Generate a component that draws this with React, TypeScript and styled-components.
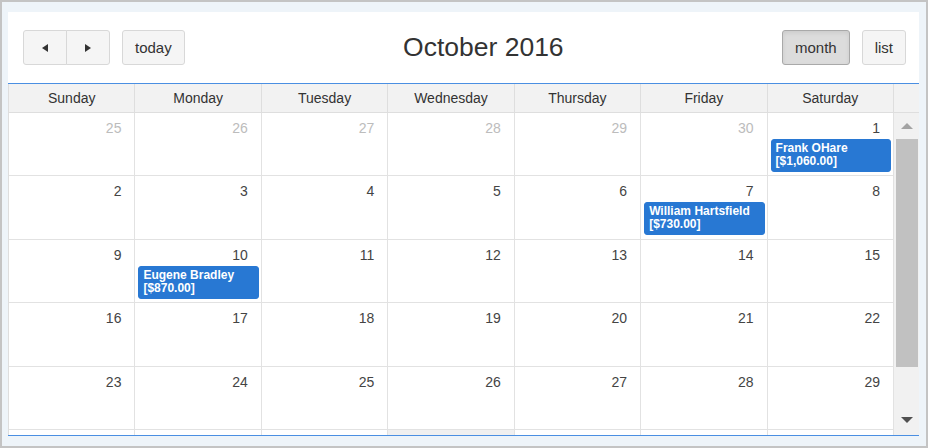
import React from "react";
import styled, { createGlobalStyle, css } from "styled-components";

const GlobalStyle = createGlobalStyle`
  html, body { margin: 0; padding: 0; }
  body { font-family: "Liberation Sans", Arial, sans-serif; }
  * { box-sizing: border-box; }
`;

const Frame = styled.div`
  width: 928px;
  height: 448px;
  border: 2px solid #c4c4c4;
  background: #eef4f9;
  padding: 10px 7px 10px 6px;
  display: flex;
`;

const Panel = styled.div`
  flex: 1;
  background: #fff;
  display: flex;
  flex-direction: column;
  overflow: hidden;
`;

const Toolbar = styled.div`
  height: 71px;
  flex-shrink: 0;
  display: flex;
  align-items: center;
  padding: 0 13px 0 15px;
`;

const Group = styled.div`
  display: flex;
  align-items: center;
  gap: 12px;
`;

const Joined = styled.div`
  display: flex;
`;

const Button = styled.button<{ $active?: boolean; $join?: "first" | "last" }>`
  height: 35px;
  padding: 0 12px;
  font-family: "Liberation Sans", Arial, sans-serif;
  font-size: 15px;
  color: #333;
  background: #f5f5f5;
  border: 1px solid #d8d8d8;
  border-radius: 3px;
  display: flex;
  align-items: center;
  justify-content: center;
  cursor: pointer;
  ${(p) =>
    p.$active &&
    css`
      background: #dcdcdc;
      border-color: #a9a9a9;
      box-shadow: inset 0 2px 4px rgba(0, 0, 0, 0.08);
    `}
  ${(p) =>
    p.$join === "first" &&
    css`
      width: 44px;
      border-radius: 3px 0 0 3px;
    `}
  ${(p) =>
    p.$join === "last" &&
    css`
      width: 44px;
      margin-left: -1px;
      border-radius: 0 3px 3px 0;
    `}
`;

const Arrow = styled.span<{ $dir: "left" | "right" }>`
  width: 0;
  height: 0;
  border-top: 4px solid transparent;
  border-bottom: 4px solid transparent;
  ${(p) =>
    p.$dir === "left"
      ? css`border-right: 6px solid #333;`
      : css`border-left: 6px solid #333;`}
`;

const Title = styled.h2`
  flex: 1;
  margin: 0;
  text-align: center;
  font-size: 26.5px;
  font-weight: normal;
  color: #333;
`;

const View = styled.div`
  flex: 1;
  min-height: 0;
  display: flex;
  flex-direction: column;
  border-top: 1px solid #4a8fe2;
  border-bottom: 1px solid #4a8fe2;
`;

const HeadRow = styled.div`
  height: 29px;
  flex-shrink: 0;
  display: grid;
  grid-template-columns: repeat(7, 1fr) 25px;
  border-left: 1px solid #dedede;
  border-bottom: 1px solid #dedede;
  background: #f2f2f2;
`;

const HeadCell = styled.div<{ $last?: boolean }>`
  border-right: ${(p) => (p.$last ? "none" : "1px solid #dedede")};
  text-align: center;
  font-size: 14px;
  line-height: 28px;
  color: #333;
`;

const Body = styled.div`
  flex: 1;
  min-height: 0;
  display: flex;
`;

const Weeks = styled.div`
  flex: 1;
  min-width: 0;
  border-left: 1px solid #dedede;
  overflow: hidden;
  display: flex;
  flex-direction: column;
`;

const WeekRow = styled.div`
  height: 63.4px;
  flex-shrink: 0;
  display: grid;
  grid-template-columns: repeat(7, 1fr);
  border-bottom: 1px solid #e2e2e2;
`;

const DayCell = styled.div<{ $shade?: boolean }>`
  border-right: 1px solid #e2e2e2;
  background: ${(p) => (p.$shade ? "#f0f0f0" : "#fff")};
  min-width: 0;
`;

const DayNumber = styled.div<{ $other?: boolean }>`
  text-align: right;
  padding: 5px 13px 0 0;
  font-size: 14px;
  line-height: 20px;
  color: ${(p) => (p.$other ? "#bcbcbc" : "#444")};
`;

const Event = styled.div`
  margin: 1px 2px 0 3px;
  padding: 2px 4px 3px 4px;
  background: #2878d3;
  border: 1px solid #2878d3;
  border-radius: 3px;
  color: #fff;
  font-size: 12px;
  font-weight: bold;
  line-height: 13px;
  white-space: nowrap;
  overflow: hidden;
`;

const Track = styled.div`
  width: 25px;
  flex-shrink: 0;
  background: #f1f1f1;
  display: flex;
  flex-direction: column;
  align-items: center;
`;

const ArrowBox = styled.div<{ $h: number; $mb?: number }>`
  height: ${(p) => p.$h}px;
  margin-bottom: ${(p) => p.$mb || 0}px;
  width: 100%;
  display: flex;
  align-items: center;
  justify-content: center;
  flex-shrink: 0;
`;

const TrackArrow = styled.span<{ $dir: "up" | "down" }>`
  width: 0;
  height: 0;
  border-left: 6px solid transparent;
  border-right: 6px solid transparent;
  ${(p) =>
    p.$dir === "up"
      ? css`border-bottom: 6px solid #a3a3a3;`
      : css`border-top: 6px solid #505050;`}
`;

const Thumb = styled.div`
  width: 22px;
  height: 228px;
  background: #c1c1c1;
  flex-shrink: 0;
`;

const Spacer = styled.div`
  flex: 1;
`;

type Ev = { name: string; amount: string };
type Day = { n?: number; other?: boolean; shade?: boolean; ev?: Ev };

const weeks: Day[][] = [
  [
    { n: 25, other: true },
    { n: 26, other: true },
    { n: 27, other: true },
    { n: 28, other: true },
    { n: 29, other: true },
    { n: 30, other: true },
    { n: 1, ev: { name: "Frank OHare", amount: "[$1,060.00]" } },
  ],
  [
    { n: 2 },
    { n: 3 },
    { n: 4 },
    { n: 5 },
    { n: 6 },
    { n: 7, ev: { name: "William Hartsfield", amount: "[$730.00]" } },
    { n: 8 },
  ],
  [
    { n: 9 },
    { n: 10, ev: { name: "Eugene Bradley", amount: "[$870.00]" } },
    { n: 11 },
    { n: 12 },
    { n: 13 },
    { n: 14 },
    { n: 15 },
  ],
  [{ n: 16 }, { n: 17 }, { n: 18 }, { n: 19 }, { n: 20 }, { n: 21 }, { n: 22 }],
  [{ n: 23 }, { n: 24 }, { n: 25 }, { n: 26 }, { n: 27 }, { n: 28 }, { n: 29 }],
  [{}, {}, {}, { shade: true }, {}, {}, {}],
];

const dayNames = ["Sunday", "Monday", "Tuesday", "Wednesday", "Thursday", "Friday", "Saturday"];

export default function App() {
  return (
    <>
      <GlobalStyle />
      <Frame>
        <Panel>
          <Toolbar>
            <Group>
              <Joined>
                <Button $join="first" aria-label="prev">
                  <Arrow $dir="left" />
                </Button>
                <Button $join="last" aria-label="next">
                  <Arrow $dir="right" />
                </Button>
              </Joined>
              <Button>today</Button>
            </Group>
            <Title>October 2016</Title>
            <Group>
              <Button $active>month</Button>
              <Button>list</Button>
            </Group>
          </Toolbar>
          <View>
            <HeadRow>
              {dayNames.map((d) => (
                <HeadCell key={d}>{d}</HeadCell>
              ))}
              <HeadCell $last />
            </HeadRow>
            <Body>
              <Weeks>
                {weeks.map((w, i) => (
                  <WeekRow key={i}>
                    {w.map((d, j) => (
                      <DayCell key={j} $shade={d.shade}>
                        {d.n !== undefined && <DayNumber $other={d.other}>{d.n}</DayNumber>}
                        {d.ev && (
                          <Event>
                            <div>{d.ev.name}</div>
                            <div>{d.ev.amount}</div>
                          </Event>
                        )}
                      </DayCell>
                    ))}
                  </WeekRow>
                ))}
              </Weeks>
              <Track>
                <ArrowBox $h={26}>
                  <TrackArrow $dir="up" />
                </ArrowBox>
                <Thumb />
                <Spacer />
                <ArrowBox $h={24} $mb={3}>
                  <TrackArrow $dir="down" />
                </ArrowBox>
              </Track>
            </Body>
          </View>
        </Panel>
      </Frame>
    </>
  );
}
